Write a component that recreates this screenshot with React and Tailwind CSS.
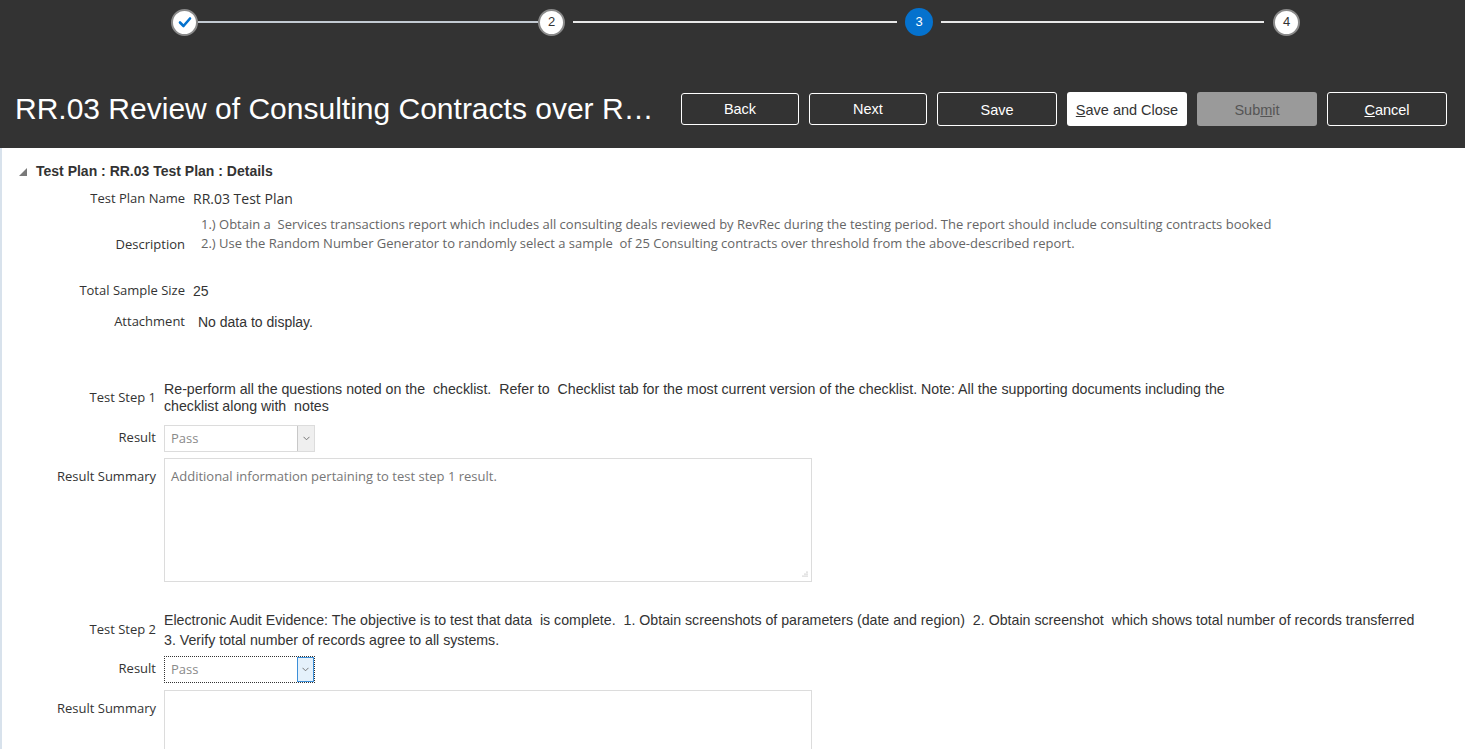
import React from "react";

const arial = { fontFamily: '"Liberation Sans", Arial, sans-serif' };

function StepCircle({ state, n }) {
  if (state === "done") {
    return (
      <div className="flex h-[27px] w-[27px] shrink-0 items-center justify-center rounded-full border-2 border-[#8a8a8a] bg-white">
        <svg width="14" height="12" viewBox="0 0 14 12">
          <path d="M2 6.5 L5.5 10 L12 2.5" fill="none" stroke="#0572ce" strokeWidth="2.6" strokeLinecap="round" strokeLinejoin="round" />
        </svg>
      </div>
    );
  }
  if (state === "current") {
    return (
      <div className="flex h-[28px] w-[28px] shrink-0 items-center justify-center rounded-full bg-[#0572ce] text-[13px] text-white">
        {n}
      </div>
    );
  }
  return (
    <div className="flex h-[27px] w-[27px] shrink-0 items-center justify-center rounded-full border-2 border-[#8a8a8a] bg-white text-[13px] text-[#333]">
      {n}
    </div>
  );
}

function HeaderButton({ children, variant = "outline", offset = false, narrow = false }) {
  const base = "flex shrink-0 items-center justify-center rounded-[3px] text-[14.5px]";
  const styles = {
    outline: "border border-white text-white",
    light: "bg-white text-[#333]",
    disabled: "bg-[#9a9a9a] text-[#555]",
  };
  const size = narrow ? "h-[32px] w-[118px]" : "h-[34px] w-[120px]";
  return (
    <div className={`${base} ${size} ${styles[variant]} ${offset ? "pt-[4px]" : "pt-[1px]"}`}>{children}</div>
  );
}

function Select({ focused }) {
  return (
    <div
      className={`flex h-[27px] w-[151px] items-stretch bg-white ${
        focused ? "border border-dotted border-[#333]" : "border border-[#dcdcdc]"
      }`}
    >
      <div className="flex flex-1 items-end pb-[2px] pl-[6px] text-[13px] text-[#8a8a8a]">Pass</div>
      <div
        className={`flex w-[17px] items-center justify-center ${
          focused ? "border border-[#3d8fd8] bg-[#e5f1fb]" : "border-l border-[#c8c8c8] bg-[#efefef]"
        }`}
      >
        <svg width="7" height="5" viewBox="0 0 7 5">
          <path d="M0.5 0.8 L3.5 3.8 L6.5 0.8" fill="none" stroke="#777" strokeWidth="1" />
        </svg>
      </div>
    </div>
  );
}

export default function App() {
  const label = "text-right text-[13px] text-[#333]";
  return (
    <div className="h-[749px] w-[1465px] overflow-hidden bg-white" style={{ fontFamily: '"Open Sans", "Noto Sans", sans-serif' }}>
      {/* header */}
      <div className="h-[148px] bg-[#333333]" style={arial}>
        <div className="flex items-center pl-[171px] pt-[8px]">
          <StepCircle state="done" />
          <div className="h-[2px] w-[340px] bg-[#c3cad2]" />
          <StepCircle n="2" />
          <div className="mx-[8px] h-[2px] w-[324px] bg-[#e8e8e8]" />
          <StepCircle state="current" n="3" />
          <div className="ml-[8px] mr-[9px] h-[2px] w-[323px] bg-[#e8e8e8]" />
          <StepCircle n="4" />
        </div>
        <div className="mt-[56px] flex items-center pl-[15px]">
          <div className="w-[666px] shrink-0 whitespace-nowrap text-[30px] leading-none text-white">
            RR.03 Review of Consulting Contracts over R…
          </div>
          <div className="flex items-center gap-[10px]">
            <HeaderButton narrow>Back</HeaderButton>
            <HeaderButton narrow>Next</HeaderButton>
            <HeaderButton offset>Save</HeaderButton>
            <HeaderButton variant="light" offset>
              <span><span className="underline">S</span>ave and Close</span>
            </HeaderButton>
            <HeaderButton variant="disabled" offset>
              <span>Sub<span className="underline">m</span>it</span>
            </HeaderButton>
            <HeaderButton offset>
              <span><span className="underline">C</span>ancel</span>
            </HeaderButton>
          </div>
        </div>
      </div>

      {/* body */}
      <div className="h-[601px] border-l-2 border-[#d8e2ec] pt-[13px]">
        <div className="flex items-center pl-[16px]" style={arial}>
          <svg width="10" height="10" viewBox="0 0 10 10" className="mr-[8px]">
            <path d="M1 9 L9 9 L9 1 Z" fill="#7a7a7a" />
          </svg>
          <span className="text-[14px] font-bold text-[#333]">Test Plan : RR.03 Test Plan : Details</span>
        </div>

        <div className="mt-[6px] flex items-center">
          <div className={`${label} w-[183px] shrink-0`}>Test Plan Name</div>
          <div className="pl-[8px] text-[14px] text-[#333]">RR.03 Test Plan</div>
        </div>

        <div className="mt-[6px] flex">
          <div className={`${label} w-[183px] shrink-0 pt-[20px]`}>Description</div>
          <div className="pl-[16px] text-[13px] leading-[19px] text-[#666]">
            <div>1.) Obtain a&nbsp; Services transactions report which includes all consulting deals reviewed by RevRec during the testing period. The report should include consulting contracts booked</div>
            <div>2.) Use the Random Number Generator to randomly select a sample&nbsp; of 25 Consulting contracts over threshold from the above-described report.</div>
          </div>
        </div>

        <div className="mt-[26px] flex items-center">
          <div className={`${label} w-[183px] shrink-0`}>Total Sample Size</div>
          <div className="pl-[8px] text-[14px] text-[#333]" style={arial}>25</div>
        </div>

        <div className="mt-[10px] flex items-center">
          <div className={`${label} w-[183px] shrink-0`}>Attachment</div>
          <div className="pl-[13px] text-[14px] text-[#333]" style={arial}>No data to display.</div>
        </div>

        {/* test step 1 */}
        <div className="mt-[48px] flex items-center">
          <div className={`${label} w-[154px] shrink-0`}>Test Step 1</div>
          <div className="w-[1080px] pl-[8px] text-[14.2px] leading-[17px] text-[#333]" style={arial}>
            Re-perform all the questions noted on the&nbsp; checklist.&nbsp; Refer to&nbsp; Checklist tab for the most current version of the checklist. Note: All the supporting documents including the checklist along with&nbsp; notes
          </div>
        </div>

        <div className="mt-[10px] flex items-center">
          <div className={`${label} w-[154px] shrink-0`}>Result</div>
          <div className="pl-[8px]">
            <Select />
          </div>
        </div>

        <div className="mt-[6px] flex">
          <div className={`${label} w-[154px] shrink-0 pt-[9px]`}>Result Summary</div>
          <div className="pl-[8px]">
            <div className="relative h-[124px] w-[648px] border border-[#dcdcdc] px-[6px] pt-[8px] text-[13px] text-[#777]">
              Additional information pertaining to test step 1 result.
              <svg width="7" height="7" viewBox="0 0 7 7" className="absolute bottom-[3px] right-[3px]">
                <circle cx="6" cy="1" r="0.6" fill="#999" />
                <circle cx="4" cy="3" r="0.6" fill="#999" />
                <circle cx="6" cy="3" r="0.6" fill="#999" />
                <circle cx="2" cy="5" r="0.6" fill="#999" />
                <circle cx="4" cy="5" r="0.6" fill="#999" />
                <circle cx="6" cy="5" r="0.6" fill="#999" />
              </svg>
            </div>
          </div>
        </div>

        {/* test step 2 */}
        <div className="mt-[28px] flex items-center">
          <div className={`${label} w-[154px] shrink-0`}>Test Step 2</div>
          <div className="pl-[8px] text-[14.2px] leading-[20px] text-[#333]" style={arial}>
            <div className="whitespace-nowrap">Electronic Audit Evidence: The objective is to test that data&nbsp; is complete.&nbsp; 1. Obtain screenshots of parameters (date and region)&nbsp; 2. Obtain screenshot&nbsp; which shows total number of records transferred</div>
            <div>3. Verify total number of records agree to all systems.</div>
          </div>
        </div>

        <div className="mt-[6px] flex items-center">
          <div className={`${label} w-[154px] shrink-0`}>Result</div>
          <div className="pl-[8px]">
            <Select focused />
          </div>
        </div>

        <div className="mt-[7px] flex">
          <div className={`${label} w-[154px] shrink-0 pt-[9px]`}>Result Summary</div>
          <div className="pl-[8px]">
            <div className="h-[124px] w-[648px] border border-[#dcdcdc]" />
          </div>
        </div>
      </div>
    </div>
  );
}
